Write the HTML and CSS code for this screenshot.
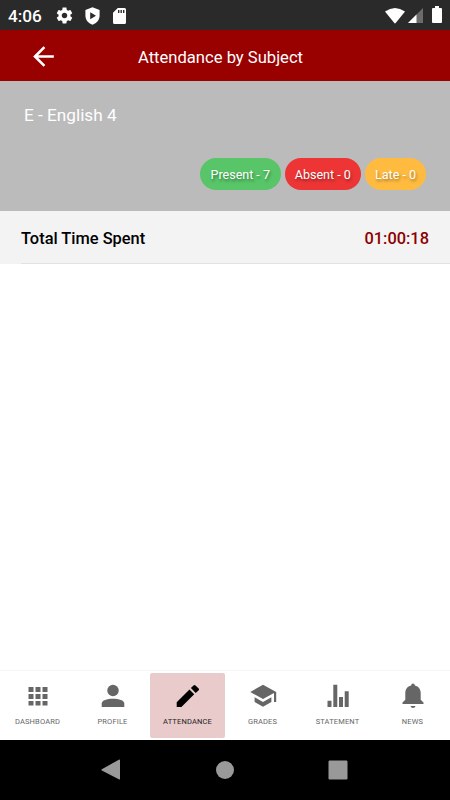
FILE: index.html
```html
<!DOCTYPE html>
<html lang="en">
<head>
  <meta charset="UTF-8" />
  <meta name="viewport" content="width=device-width, initial-scale=1.0" />
  <title>Attendance by Subject</title>
  <link rel="stylesheet" href="styles.css">
</head>
<body>
  <div class="status-bar">
    <span class="clock">4:06</span>
    <svg class="gear" width="19" height="19" viewBox="0 0 24 24"><path d="M19.43 12.98c.04-.32.07-.64.07-.98s-.03-.66-.07-.98l2.11-1.65c.19-.15.24-.42.12-.64l-2-3.46c-.12-.22-.39-.3-.61-.22l-2.49 1c-.52-.4-1.08-.73-1.69-.98l-.38-2.65C14.46 2.18 14.25 2 14 2h-4c-.25 0-.46.18-.49.42l-.38 2.65c-.61.25-1.17.59-1.69.98l-2.49-1c-.23-.09-.49 0-.61.22l-2 3.46c-.13.22-.07.49.12.64l2.11 1.65c-.04.32-.07.65-.07.98s.03.66.07.98l-2.11 1.65c-.19.15-.24.42-.12.64l2 3.46c.12.22.39.3.61.22l2.49-1c.52.4 1.08.73 1.69.98l.38 2.65c.03.24.24.42.49.42h4c.25 0 .46-.18.49-.42l.38-2.65c.61-.25 1.17-.59 1.69-.98l2.49 1c.23.09.49 0 .61-.22l2-3.46c.12-.22.07-.49-.12-.64l-2.11-1.65zM12 15.5c-1.93 0-3.5-1.57-3.5-3.5s1.57-3.5 3.5-3.5 3.5 1.57 3.5 3.5-1.57 3.5-3.5 3.5z"/></svg>
    <svg class="shield" width="15" height="18" viewBox="0 0 15 18"><path fill-rule="evenodd" d="M7.500 .3L14.600 3V8.500C14.600 12.700 11.800 16.300 7.500 17.700C3.200 16.300 .4 12.700 .4 8.500V3ZM5.200 5.300V12.300L11 8.800Z"/></svg>
    <svg class="sd" width="13" height="16" viewBox="0 0 13 16"><path fill-rule="evenodd" d="M4.800 0H11.500Q13 0 13 1.500V14.500Q13 16 11.500 16H1.500Q0 16 0 14.500V4.800ZM5 2V5H6.400V2ZM7.500 2V5H8.900V2ZM10 2V5H11.400V2Z"/></svg>
    <svg class="wifi" width="20" height="16" viewBox="0 0 20 16"><path d="M0 3.500Q10-3.500 20 3.500L10.700 15Q10 15.800 9.300 15Z"/></svg>
    <svg class="signal" width="15" height="15" viewBox="0 0 15 15"><path fill="#6b6b6b" d="M0 15L15 0V15Z"/><path d="M0 15L8.500 6.500V15Z"/></svg>
    <svg class="battery" width="10" height="17" viewBox="0 0 10 17"><path d="M3 0H7V2H9Q10 2 10 3V16Q10 17 9 17H1Q0 17 0 16V3Q0 2 1 2H3Z"/></svg>
  </div>

  <header class="header">
    <svg class="back" width="31" height="31" viewBox="0 0 24 24"><path d="M20 11H7.830l5.590-5.590L12 4l-8 8 8 8 1.410-1.410L7.830 13H20z"/></svg>
    <h1 class="title">Attendance by Subject</h1>
  </header>

  <section class="subject">
    <h2 class="subject-name">E - English 4</h2>
    <div class="badges">
      <span class="badge present">Present - 7</span>
      <span class="badge absent">Absent - 0</span>
      <span class="badge late">Late - 0</span>
    </div>
  </section>

  <main class="content">
    <div class="total">
      <div class="total-inner">
        <span>Total Time Spent</span>
        <span class="time">01:00:18</span>
      </div>
    </div>
  </main>

  <nav class="tabs">
    <a class="tab">
      <svg width="30" height="30" viewBox="0 0 30 30"><path d="M5.500 7h5v5h-5zM12.500 7h5v5h-5zM19.500 7h5v5h-5zM5.500 14h5v5h-5zM12.500 14h5v5h-5zM19.500 14h5v5h-5zM5.500 21h5v4.500h-5zM12.500 21h5v4.500h-5zM19.500 21h5v4.500h-5z"/></svg>
      <span>DASHBOARD</span>
    </a>
    <a class="tab">
      <svg width="30" height="30" viewBox="0 0 30 30"><circle cx="15" cy="10.500" r="5.700"/><path d="M3.700 27V23.500C3.700 20.300 9 18.700 15 18.700S26.300 20.300 26.300 23.500V27Z"/></svg>
      <span>PROFILE</span>
    </a>
    <a class="tab active">
      <svg width="30" height="30" viewBox="0 0 30 30"><path d="M3.700 22.300L16.500 9.500L21.200 14.200L8.400 27H3.700ZM17.900 8.100L20.500 5.400Q21.500 4.500 22.500 5.400L25.700 8.600Q26.500 9.500 25.700 10.300L22.700 12.900Z"/></svg>
      <span>ATTENDANCE</span>
    </a>
    <a class="tab">
      <svg width="30" height="30" viewBox="0 0 30 30"><path d="M15 4.700L2.300 12L15 19.100L26 13V22H28.200V12ZM6.600 17.300V21.900L15 26.800L23.400 21.900V17.300L15 22Z"/></svg>
      <span>GRADES</span>
    </a>
    <a class="tab">
      <svg width="30" height="30" viewBox="0 0 30 30"><path d="M4.500 20.700h4V27h-4zM10.300 4.700h4V27h-4zM16 17h4v10h-4zM21.700 11.300h4V27h-4z"/></svg>
      <span>STATEMENT</span>
    </a>
    <a class="tab">
      <svg width="30" height="30" viewBox="0 0 30 30"><path d="M15 3.500Q16.700 3.500 16.900 5.600C20.700 6.500 22.700 9.500 22.700 13V19.700L25.500 22.500V24H4.500V22.500L7.300 19.700V13C7.300 9.500 9.300 6.500 13.100 5.600Q13.300 3.500 15 3.500ZM12.500 26H17.500Q17 28 15 28T12.500 26Z"/></svg>
      <span>NEWS</span>
    </a>
  </nav>

  <div class="system-nav">
    <svg width="20" height="22" viewBox="0 0 20 22"><path d="M.8 10.300L17.800 .7Q19 0 19 1.300V19.700Q19 21 17.800 20.300L.8 11.400Q0 10.900 .8 10.300Z"/></svg>
    <svg width="20" height="20" viewBox="0 0 20 20"><circle cx="10" cy="10" r="9"/></svg>
    <svg width="20" height="20" viewBox="0 0 20 20"><rect x=".5" y=".5" width="19" height="19" rx="1.200"/></svg>
  </div>
</body>
</html>
```

FILE: styles.css
```css
* {
  box-sizing: border-box;
}
body {
  margin: 0;
  height: 100vh;
  display: flex;
  flex-direction: column;
  font-family: Roboto, "Liberation Sans", sans-serif;
  background: #fff;
  color: #000;
}
svg {
  display: block;
  flex: none;
}
.status-bar {
  height: 30px;
  padding: 1px 8px 0;
  display: flex;
  align-items: center;
  background: #2a2a2a;
  color: #fff;
  fill: #fff;
}
.clock {
  width: 47px;
  font-size: 17.2px;
  font-weight: 500;
}
.shield {
  margin-left: 11px;
}
.sd {
  margin-left: 13px;
}
.wifi {
  margin-left: auto;
}
.signal {
  margin-left: 3px;
}
.battery {
  margin-left: 9px;
  margin-top: -2px;
}
.header {
  height: 51px;
  display: grid;
  grid-template-columns: 60px 1fr 60px;
  align-items: center;
  background: #990000;
  color: #fff;
}
.back {
  margin: 1px 0 0 28px;
  fill: #fff;
}
.title {
  margin: 3px 0 0;
  padding-right: 9px;
  font-size: 16.6px;
  font-weight: 400;
  text-align: center;
}
.subject {
  height: 130px;
  padding: 24px 24px 21px;
  display: flex;
  flex-direction: column;
  justify-content: space-between;
  background: #bbb;
  color: #fff;
}
.subject-name {
  margin: 0;
  font-size: 17.2px;
  font-weight: 400;
}
.badges {
  display: flex;
  justify-content: flex-end;
  gap: 4px;
}
.badge {
  height: 32px;
  width: 80.5px;
  border-radius: 16px;
  font-size: 12.5px;
  line-height: 33px;
  text-align: center;
  text-shadow: 1px 2px 3px rgba(0, 0, 0, 0.4);
}
.present {
  background: #57c568;
}
.absent {
  width: 76.5px;
  background: #ed3535;
}
.late {
  width: 61px;
  background: #ffbb40;
}
.content {
  flex: 1;
}
.total {
  height: 53px;
  padding-left: 21px;
  background: #f3f3f3;
}
.total-inner {
  height: 53px;
  padding: 2px 21px 0 0;
  display: flex;
  justify-content: space-between;
  align-items: center;
  border-bottom: 1px solid #e2e2e2;
  font-size: 16.4px;
  font-weight: 500;
}
.time {
  color: #8b0000;
}
.tabs {
  height: 70px;
  padding: 2px 0;
  display: flex;
  border-top: 1px solid #f5f5f5;
}
.tab {
  flex: 1;
  height: 65px;
  padding-top: 7px;
  display: flex;
  flex-direction: column;
  align-items: center;
  gap: 7px;
  border-radius: 2px;
  color: #666;
  fill: #666;
  font-size: 7.5px;
  letter-spacing: 0.15px;
  line-height: 10px;
}
.active {
  background: #e9cbcb;
  color: #222;
  fill: #000;
}
.system-nav {
  height: 60px;
  padding: 0 102px 0 101px;
  display: flex;
  justify-content: space-between;
  align-items: center;
  background: #000;
  fill: #999;
}
```
